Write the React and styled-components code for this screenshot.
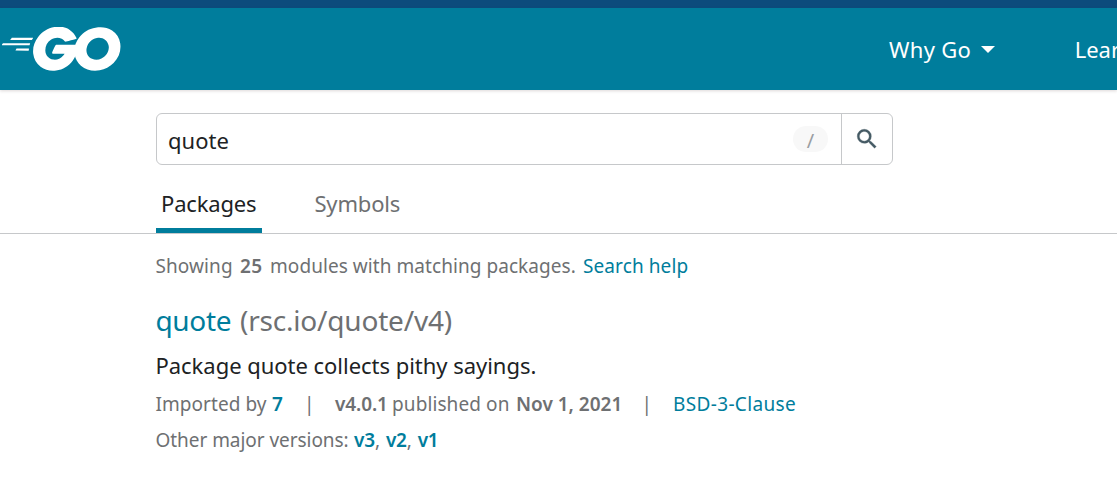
import React from 'react';
import styled, { createGlobalStyle } from 'styled-components';

const GlobalStyle = createGlobalStyle`
  * { box-sizing: border-box; }
  body {
    margin: 0;
    background: #fff;
    color: #202224;
    font-family: 'Segoe UI', 'Noto Sans', 'Open Sans', sans-serif;
    overflow: hidden;
  }
`;

const Banner = styled.div`
  height: 8px;
  background: #0c4b7c;
`;

const Header = styled.header`
  display: flex;
  align-items: center;
  height: 82px;
  background: #007d9c;
  box-shadow: 0 1px 3px rgba(80, 60, 60, 0.2);
  overflow: hidden;
`;

const Logo = styled.svg`
  flex: none;
  width: 119px;
  height: 44px;
  margin-left: 1.5px;
  fill: #fff;
`;

const Nav = styled.nav`
  display: flex;
  flex: none;
  gap: 79.5px;
  margin-left: 768.5px;
`;

const NavItem = styled.a`
  display: flex;
  align-items: center;
  gap: 10px;
  color: #fff;
  font-size: 22px;
  line-height: 30px;
  letter-spacing: ${(p) => p.$spacing || '0'};
  white-space: nowrap;
`;

const Caret = styled.i`
  border: 7px solid transparent;
  border-top-color: #fff;
  border-bottom-width: 0;
`;

const SearchForm = styled.form`
  display: flex;
  width: 737px;
  height: 52px;
  margin: 23px 0 0 156px;
  border: 1px solid #c6c8ca;
  border-radius: 6px;
`;

const SearchField = styled.div`
  display: flex;
  flex: 1;
  align-items: center;
  justify-content: space-between;
  padding: 0 13px 0 11px;
`;

const Query = styled.span`
  padding-top: 1px;
  font-size: 22px;
  line-height: 30px;
`;

const Shortcut = styled.kbd`
  width: 35px;
  height: 26px;
  border-radius: 13px;
  background: #f8f8f8;
  color: #9a9ea2;
  font: 20px/30px 'Noto Sans', sans-serif;
  text-align: center;
`;

const SearchButton = styled.button`
  display: flex;
  align-items: center;
  justify-content: center;
  width: 51px;
  padding: 0;
  border: 0;
  border-left: 1px solid #c6c8ca;
  background: none;
`;

const Tabs = styled.div`
  display: flex;
  gap: 47px;
  height: 69px;
  padding: 17px 0 0 156px;
  border-bottom: 1px solid #c6c8ca;
`;

const Tab = styled.a`
  height: 51px;
  padding: 6px 6px 0 5px;
  border-bottom: 5px solid ${(p) => (p.$active ? '#007d9c' : 'transparent')};
  color: ${(p) => (p.$active ? '#202224' : '#6e7072')};
  font-size: 22px;
  line-height: 30px;
  letter-spacing: -0.17px;
`;

const Results = styled.main`
  padding: 18px 0 0 155.5px;
  white-space: nowrap;
`;

const Line = styled.p`
  display: flex;
  margin: ${(p) => p.$top || '0'} 0 0;
  color: ${(p) => p.$color || '#6e7072'};
  font-size: ${(p) => p.$size || '19px'};
  line-height: ${(p) => p.$height || '28px'};
`;

const Piece = styled.span`
  width: ${(p) => p.$width};
  flex: none;
  letter-spacing: ${(p) => p.$spacing || '0'};
  ${(p) => p.$bold && 'font-weight: 600;'}
  ${(p) => p.$link && 'color: #007d9c;'}
`;

export default function App() {
  return (
    <>
      <GlobalStyle />
      <Banner />
      <Header>
        <Logo viewBox="25.6 78.5 205.4 76.5" preserveAspectRatio="none" aria-label="Go">
          <path d="M40.2 101.1c-.4 0-.5-.2-.3-.5l2.1-2.7c.2-.3.7-.5 1.1-.5h35.7c.4 0 .5.3.3.6l-1.7 2.6c-.2.3-.7.6-1 .6z" />
          <path d="M25.1 110.3c-.4 0-.5-.2-.3-.5l2.1-2.7c.2-.3.7-.5 1.1-.5h45.6c.4 0 .6.3.5.6l-.8 2.4c-.1.4-.5.6-.9.6z" />
          <path d="M49.3 119.5c-.4 0-.5-.3-.3-.6l1.4-2.5c.2-.3.6-.6 1-.6h20c.4 0 .7.3.7.7l-.2 2.4c0 .4-.4.7-.7.7z" />
          <path d="M153.1 99.3c-6.3 1.6-10.6 2.8-16.8 4.4-1.5.4-1.6.5-2.9-1-1.5-1.7-2.6-2.8-4.7-3.8-6.3-3.1-12.4-2.2-18.1 1.5-6.8 4.4-10.3 10.9-10.2 19 .1 8 5.6 14.6 13.5 15.7 6.8.9 12.5-1.5 17-6.6.9-1.1 1.7-2.3 2.7-3.7h-19.3c-2.1 0-2.6-1.3-1.9-3 1.3-3.1 3.7-8.3 5.1-10.9.3-.6 1-1.6 2.5-1.6h36.4c-.2 2.7-.2 5.4-.6 8.1-1.1 7.2-3.8 13.8-8.2 19.6-7.2 9.5-16.6 15.4-28.5 17-9.8 1.3-18.9-.6-26.9-6.6-7.4-5.6-11.6-13-12.7-22.2-1.3-10.9 1.9-20.7 8.5-29.3 7.1-9.3 16.5-15.2 28-17.3 9.4-1.7 18.4-.6 26.5 4.9 5.3 3.5 9.1 8.3 11.6 14.1.6.9.2 1.4-1 1.7z" />
          <path d="M186.2 154.6c-9.1-.2-17.4-2.8-24.4-8.8-5.9-5.1-9.6-11.6-10.8-19.3-1.8-11.3 1.3-21.3 8.1-30.2 7.3-9.6 16.1-14.6 28-16.7 10.2-1.8 19.8-.8 28.5 5.1 7.9 5.4 12.8 12.7 14.1 22.3 1.7 13.5-2.2 24.5-11.5 33.9-6.6 6.7-14.7 10.9-24 12.8-2.7.5-5.4.6-8 .9zM210 114.2c-.1-1.3-.1-2.3-.3-3.3-1.8-9.9-10.9-15.5-20.4-13.3-9.3 2.1-15.3 8-17.5 17.4-1.8 7.8 2 15.7 9.2 18.9 5.5 2.4 11 2.1 16.3-.6 7.9-4.1 12.2-10.5 12.7-19.1z" />
        </Logo>
        <Nav>
          <NavItem $spacing="0.3px">Why Go<Caret /></NavItem>
          <NavItem>Learn</NavItem>
        </Nav>
      </Header>
      <SearchForm>
        <SearchField>
          <Query>quote</Query>
          <Shortcut>/</Shortcut>
        </SearchField>
        <SearchButton type="button" aria-label="Search">
          <svg width="26" height="26" viewBox="0 0 24 24" fill="#455a64" stroke="#455a64" strokeWidth="0.3">
            <path d="M15.5 14h-.79l-.28-.27A6.47 6.47 0 0 0 16 9.5 6.5 6.5 0 1 0 9.5 16c1.61 0 3.09-.59 4.23-1.57l.27.28v.79l5 4.99L20.49 19l-4.99-5zm-6 0C7.01 14 5 11.99 5 9.5S7.01 5 9.5 5 14 7.01 14 9.5 11.99 14 9.5 14z" />
          </svg>
        </SearchButton>
      </SearchForm>
      <Tabs>
        <Tab $active>Packages</Tab>
        <Tab>Symbols</Tab>
      </Tabs>
      <Results>
        <Line>
          <Piece $width="84.5px" $spacing="0.1px">Showing</Piece>
          <Piece $width="30px" $bold $spacing="0.3px">25</Piece>
          <Piece $width="313px" $spacing="0.06px">modules with matching packages.</Piece>
          <Piece $link $spacing="0.1px">Search help</Piece>
        </Line>
        <Line $top="20px" $size="28px" $height="40px">
          <Piece $width="84.5px" $link $spacing="-0.35px">quote</Piece>
          <Piece $spacing="-0.2px">(rsc.io/quote/v4)</Piece>
        </Line>
        <Line $top="10px" $size="22px" $height="30px" $color="#202224">
          <Piece $spacing="-0.03px">Package quote collects pithy sayings.</Piece>
        </Line>
        <Line $top="10px">
          <Piece $width="116.5px" $spacing="0.05px">Imported by</Piece>
          <Piece $width="32px" $bold $link>7</Piece>
          <Piece $width="31px">|</Piece>
          <Piece $width="57px" $bold $spacing="-0.1px">v4.0.1</Piece>
          <Piece $width="124px" $spacing="0.1px">published on</Piece>
          <Piece $width="125.5px" $bold>Nov 1, 2021</Piece>
          <Piece $width="31.5px">|</Piece>
          <Piece $link $spacing="0.35px">BSD-3-Clause</Piece>
        </Line>
        <Line $top="8px">
          <Piece $width="198.5px" $spacing="-0.05px">Other major versions:</Piece>
          <Piece $bold $link $spacing="-0.2px">v3</Piece>
          <Piece $width="11px">,</Piece>
          <Piece $bold $link $spacing="-0.2px">v2</Piece>
          <Piece $width="11px">,</Piece>
          <Piece $bold $link $spacing="-0.4px">v1</Piece>
        </Line>
      </Results>
    </>
  );
}
